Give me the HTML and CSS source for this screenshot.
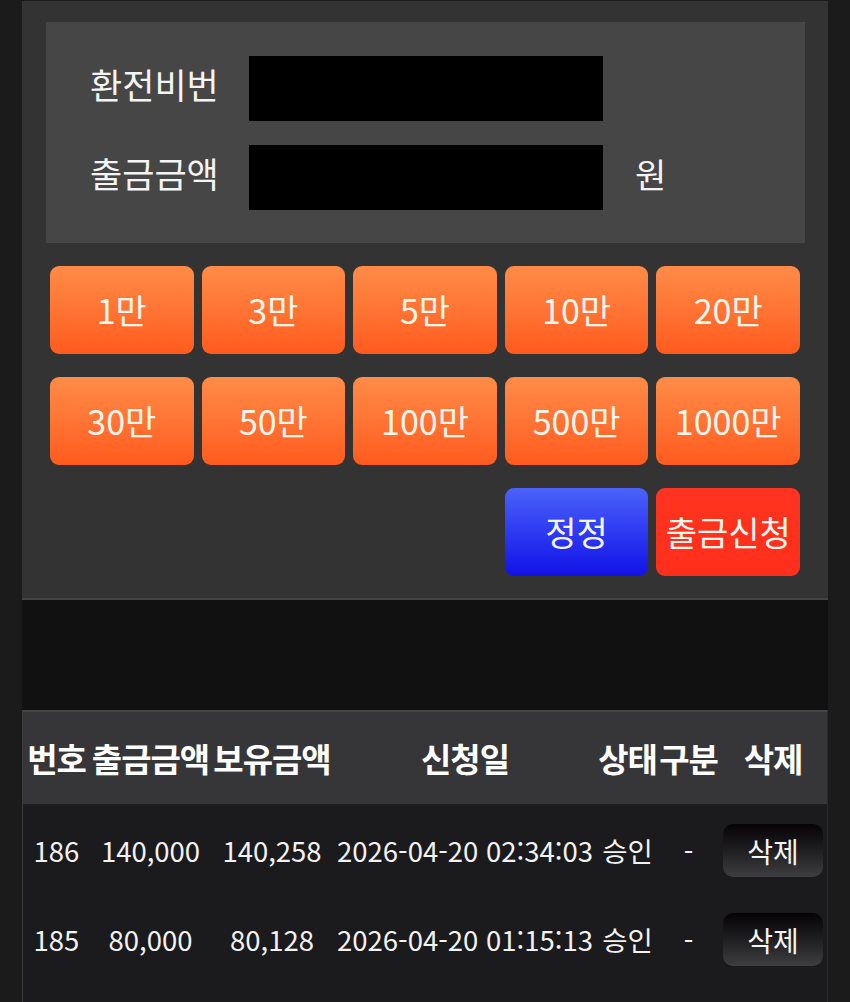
FILE: index.html
```html
<!DOCTYPE html>
<html lang="ko">
<head>
<meta charset="utf-8">
<title>출금신청</title>
<link rel="stylesheet" href="styles.css">
</head>
<body>
<div class="wrap">
  <section class="panel">
    <div class="form-box">
      <div class="form-row">
        <label class="label">환전비번</label>
        <div class="input"></div>
        <span class="unit"></span>
      </div>
      <div class="form-row">
        <label class="label">출금금액</label>
        <div class="input"></div>
        <span class="unit">원</span>
      </div>
    </div>
    <div class="btn-grid">
      <button class="btn orange">1만</button>
      <button class="btn orange">3만</button>
      <button class="btn orange">5만</button>
      <button class="btn orange">10만</button>
      <button class="btn orange">20만</button>
      <button class="btn orange">30만</button>
      <button class="btn orange">50만</button>
      <button class="btn orange">100만</button>
      <button class="btn orange">500만</button>
      <button class="btn orange">1000만</button>
      <button class="btn blue col4">정정</button>
      <button class="btn red">출금신청</button>
    </div>
  </section>
  <div class="spacer"></div>
  <section class="table">
    <div class="thead">
      <div class="c">번호</div>
      <div class="c">출금금액</div>
      <div class="c">보유금액</div>
      <div class="c">신청일</div>
      <div class="c">상태</div>
      <div class="c">구분</div>
      <div class="c">삭제</div>
    </div>
    <div class="trow">
      <div class="c">186</div>
      <div class="c">140,000</div>
      <div class="c">140,258</div>
      <div class="c">2026-04-20 02:34:03</div>
      <div class="c">승인</div>
      <div class="c">-</div>
      <div class="c"><button class="del">삭제</button></div>
    </div>
    <div class="trow">
      <div class="c">185</div>
      <div class="c">80,000</div>
      <div class="c">80,128</div>
      <div class="c">2026-04-20 01:15:13</div>
      <div class="c">승인</div>
      <div class="c">-</div>
      <div class="c"><button class="del">삭제</button></div>
    </div>
    <div class="trow">
      <div class="c"></div>
      <div class="c"></div>
      <div class="c"></div>
      <div class="c"></div>
      <div class="c"></div>
      <div class="c"></div>
      <div class="c"><div class="del del-stub"></div></div>
    </div>
  </section>
</div>
</body>
</html>
```
FILE: styles.css
```css
* { box-sizing: border-box; }
html, body { margin: 0; padding: 0; }
body {
  background: #1b1b1b;
  font-family: "Noto Sans CJK KR", "Noto Sans", sans-serif;
  color: #fff;
  height: 1002px;
  overflow: hidden;
}
.wrap {
  margin: 0 22px;
  padding-top: 1px;
}
.panel {
  background: #333333;
  padding: 21px 0 22px;
  border-bottom: 2px solid #444444;
}
.form-box {
  background: #464646;
  margin: 0 23px 0 24px;
  padding: 34px 0 33px 44px;
  display: flex;
  flex-direction: column;
  gap: 24px;
}
.form-row {
  display: flex;
  align-items: center;
  height: 65px;
}
.label {
  width: 159px;
  font-size: 35px;
  line-height: 1;
  white-space: nowrap;
  color: #f4f4f4;
  margin-bottom: 10px;
}
.input {
  width: 354px;
  height: 65px;
  background: #000;
}
.unit {
  margin-left: 32px;
  margin-bottom: 8px;
  font-size: 34px;
  line-height: 1;
  color: #f4f4f4;
}
.btn-grid {
  margin: 23px 28px 0;
  display: grid;
  grid-template-columns: repeat(5, 1fr);
  grid-auto-rows: 88px;
  column-gap: 8px;
  row-gap: 23px;
}
.btn {
  border: none;
  border-radius: 9px;
  font-family: "Noto Sans CJK KR", "Noto Sans", sans-serif;
  font-size: 34px;
  color: #fff6ee;
  padding: 0;
  line-height: 1;
}
.orange { background: linear-gradient(to bottom, #ff8b47 0%, #ff7434 50%, #ff5b1e 100%); }
.blue { background: linear-gradient(to bottom, #4b63fb 0%, #2d3af2 50%, #1212e6 100%); color: #f4f4ff; }
.red { background: linear-gradient(to bottom, #ff3420 0%, #ff2f1b 100%); }
.col4 { grid-column: 4; }
.spacer {
  height: 110px;
  background: #121112;
}
.table {
  border-top: 2px solid #444444;
  border-left: 1px solid #3a3a3a;
  border-right: 1px solid #2a2a2a;
}
.thead, .trow {
  display: grid;
  grid-template-columns: 67px 121px 122px 264px 61px 61px 108px;
  align-items: center;
}
.thead {
  height: 94px;
  background: #363537;
  border-bottom: 2px solid #1e1d1f;
  font-size: 33px;
  font-weight: 700;
}
.trow {
  height: 89px;
  background: #1b1a1c;
  font-size: 27.5px;
  color: #f2f2f2;
}
.c {
  text-align: center;
  white-space: nowrap;
  line-height: 1;
}
.thead .c { letter-spacing: -1px; }
.del {
  width: 100px;
  height: 53px;
  border: none;
  border-radius: 10px;
  background: linear-gradient(to bottom, #050305 0%, #1c1b1d 45%, #3e3d3f 100%);
  color: #f4f4f4;
  font-family: "Noto Sans CJK KR", "Noto Sans", sans-serif;
  font-size: 28px;
  line-height: 1;
  padding: 0;
  display: block;
  margin: 0 auto;
}
```
